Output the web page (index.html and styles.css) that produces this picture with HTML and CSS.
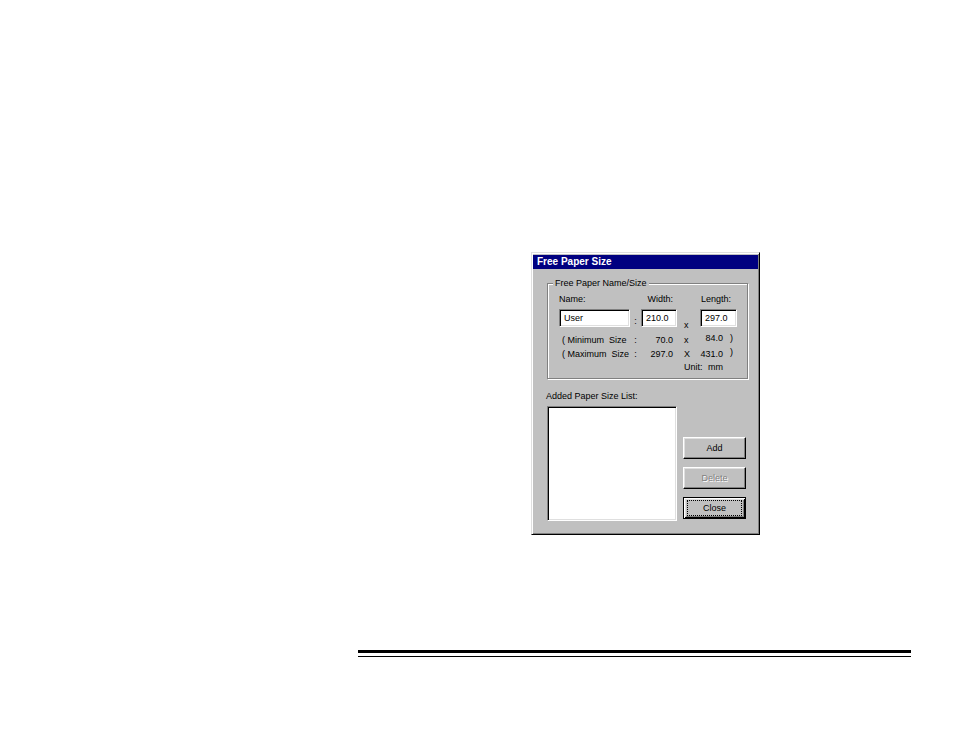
FILE: index.html
```html
<!DOCTYPE html>
<html>
<head>
<meta charset="utf-8">
<title>Free Paper Size</title>
<link rel="stylesheet" href="styles.css">
</head>
<body>
<div class="page">
  <div class="dialog">
    <div class="titlebar">Free Paper Size</div>
    <div class="group">
      <div class="group-label">Free Paper Name/Size</div>
      <div class="grid">
        <div class="txt c1 r1">Name:</div>
        <div class="txt c3 r1 right">Width:</div>
        <div class="txt c56 r1 len">Length:</div>

        <div class="field c1 r2">User</div>
        <div class="txt c2 r2 center colon">:</div>
        <div class="field c3 r2">210.0</div>
        <div class="txt c4 r2 times">x</div>
        <div class="field c56 r2">297.0</div>

        <div class="txt c1 r3 paren">( Minimum&nbsp; Size</div>
        <div class="txt c2 r3 center">:</div>
        <div class="txt c3 r3 right">70.0</div>
        <div class="txt c4 r3 xs">x</div>
        <div class="txt c5 r3 right up">84.0</div>
        <div class="txt c6 r3 cp up">)</div>

        <div class="txt c1 r4 paren">( Maximum&nbsp; Size</div>
        <div class="txt c2 r4 center">:</div>
        <div class="txt c3 r4 right">297.0</div>
        <div class="txt c4 r4 xs">X</div>
        <div class="txt c5 r4 right">431.0</div>
        <div class="txt c6 r4 cp up">)</div>

        <div class="txt c4 r5 xs unit">Unit:</div>
        <div class="txt c5 r5 right">mm</div>
      </div>
    </div>
    <div class="list-label">Added Paper Size List:</div>
    <div class="lower">
      <div class="listbox"></div>
      <div class="buttons">
        <div class="btn">Add</div>
        <div class="btn disabled">Delete</div>
        <div class="btn default"><span class="focus">Close</span></div>
      </div>
    </div>
  </div>
  <div class="rule"></div>
</div>
</body>
</html>
```
FILE: styles.css
```css
html, body {
  margin: 0;
  padding: 0;
  background: #ffffff;
}

body {
  font-family: "Liberation Sans", Arial, sans-serif;
  font-size: 9px;
  color: #000;
}

.page {
  width: 954px;
  height: 737px;
  padding-top: 252px;
  box-sizing: border-box;
}

.dialog {
  margin-left: 531px;
  width: 229px;
  height: 283px;
  box-sizing: border-box;
  background: #c0c0c0;
  border: 1px solid;
  border-color: #dfdfdf #000 #000 #dfdfdf;
  box-shadow: inset 1px 1px 0 #fff, inset -1px -1px 0 #808080;
  padding: 2px 1px 0 1px;
}

.titlebar {
  height: 14px;
  line-height: 14px;
  background: #000080;
  color: #fff;
  font-weight: bold;
  font-size: 10px;
  padding-left: 4px;
}

.group {
  margin: 14px 0 0 14px;
  width: 201px;
  box-sizing: border-box;
  border: 1px solid #808080;
  box-shadow: 1px 1px 0 #fff, inset 1px 1px 0 #fff;
  padding: 0 0 5px 11px;
}

.group-label {
  width: max-content;
  margin: -6px 0 0 -6px;
  padding: 0 2px;
  line-height: 11px;
  background: #c0c0c0;
}

.grid {
  margin-top: 5px;
  display: grid;
  grid-template-columns: 71px 11px 36px 23px 27px 10px;
  grid-template-rows: 15px 26px 14px 13px 11px;
  align-items: start;
}

.txt {
  line-height: 11px;
  white-space: nowrap;
}

.c1 { grid-column: 1; }
.c2 { grid-column: 2; }
.c3 { grid-column: 3; }
.c4 { grid-column: 4; }
.c5 { grid-column: 5; }
.c6 { grid-column: 6; }
.c56 { grid-column: 5 / 7; }
.r1 { grid-row: 1; }
.r2 { grid-row: 2; }
.r3 { grid-row: 3; }
.r4 { grid-row: 4; }
.r5 { grid-row: 5; }

.right { text-align: right; padding-right: 4px; }
.center { text-align: center; }
.len { padding-left: 1px; }
.colon { margin-top: 7px; }
.times { margin-top: 11px; padding-left: 7px; }
.xs { padding-left: 7px; }
.paren { padding-left: 3px; }
.cp { padding-left: 3px; }
.up { margin-top: -2px; }

.field {
  height: 18px;
  box-sizing: border-box;
  background: #fff;
  border: 1px solid;
  border-color: #808080 #fff #fff #808080;
  box-shadow: inset 1px 1px 0 #000, inset -1px -1px 0 #dfdfdf;
  padding: 1px 0 0 4px;
  line-height: 14px;
}

.list-label {
  margin: 12px 0 0 13px;
  line-height: 11px;
}

.lower {
  margin: 4px 0 0 14px;
  display: flex;
  gap: 6px;
}

.listbox {
  width: 130px;
  height: 115px;
  box-sizing: border-box;
  background: #fff;
  border: 1px solid;
  border-color: #808080 #fff #fff #808080;
  box-shadow: inset 1px 1px 0 #000, inset -1px -1px 0 #dfdfdf;
}

.buttons {
  display: flex;
  flex-direction: column;
  gap: 8px;
  padding-top: 31px;
}

.btn {
  width: 63px;
  height: 22px;
  box-sizing: border-box;
  display: flex;
  align-items: center;
  justify-content: center;
  background: #c0c0c0;
  border: 1px solid;
  border-color: #fff #000 #000 #fff;
  box-shadow: inset -1px -1px 0 #808080, inset 1px 1px 0 #dfdfdf;
  line-height: 11px;
}

.btn.disabled {
  color: #808080;
  text-shadow: 1px 1px 0 #fff;
}

.btn.default {
  border-color: #000;
  box-shadow: inset 1px 1px 0 #fff, inset -1px -1px 0 #000, inset 2px 2px 0 #dfdfdf, inset -2px -2px 0 #808080;
  padding: 2px 3px;
}

.focus {
  flex: 1;
  align-self: stretch;
  display: flex;
  align-items: center;
  justify-content: center;
  border: 1px dotted #000;
}

.rule {
  margin: 115px 0 0 358px;
  width: 553px;
  height: 3px;
  border-top: 3px solid #000;
  border-bottom: 1px solid #000;
}
```
